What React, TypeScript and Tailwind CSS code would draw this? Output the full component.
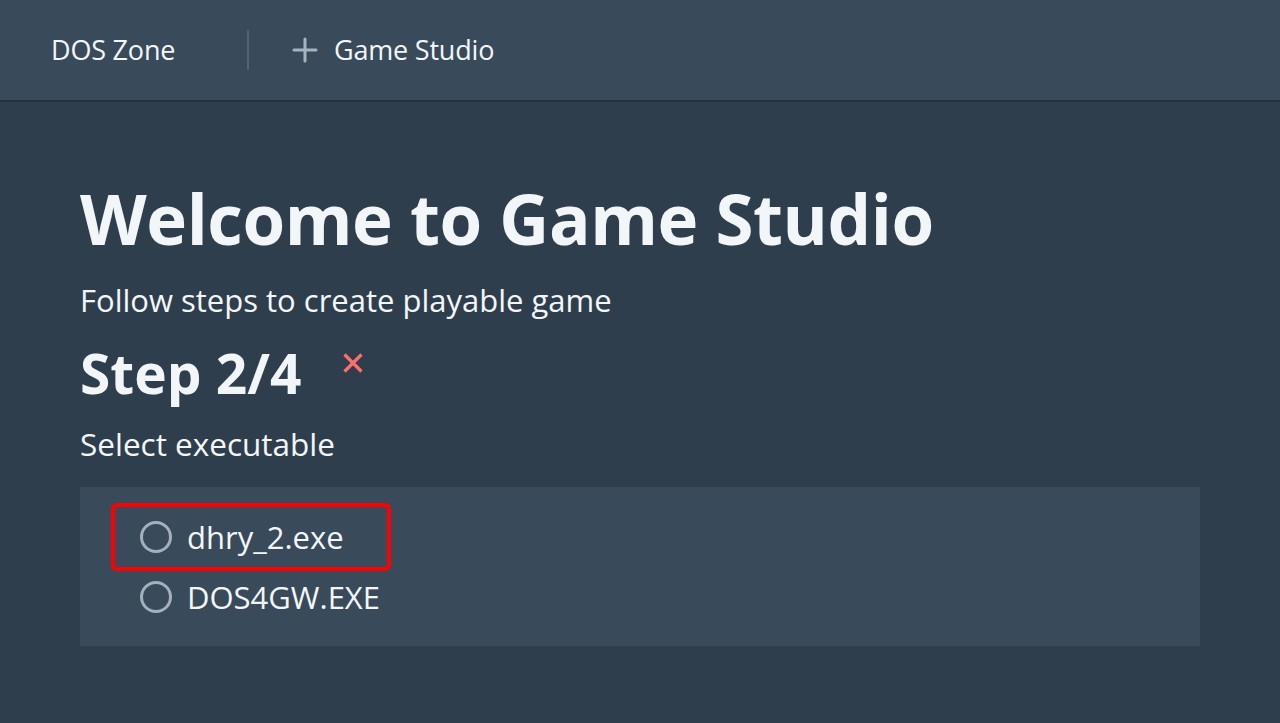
import React, { useState } from 'react';

const files = ['dhry_2.exe', 'DOS4GW.EXE'];

function App() {
    const [selected, setSelected] = useState<string | null>(null);

    return (
        <div className="min-h-[723px] bg-[#2f3e4c] text-[#f3f6f9]" style={{ fontFamily: '"Open Sans", "Noto Sans", sans-serif' }}>
            {/* top bar */}
            <div className="h-[102px] bg-[#394a5a] border-b-2 border-[#25313c] flex items-center">
                <div className="pl-[51px] w-[247px] text-[27px] tracking-[-0.2px]">DOS Zone</div>
                <div className="w-[2px] h-[40px] bg-[#536374] rounded"></div>
                <div className="flex items-center pl-[43px]">
                    <svg width="26" height="26" viewBox="0 0 26 26" className="mr-[16px]">
                        <path d="M13 2v22M2 13h22" stroke="#a6b4c2" strokeWidth="3" strokeLinecap="round" />
                    </svg>
                    <span className="text-[27px] tracking-[-0.2px]">Game Studio</span>
                </div>
            </div>

            <div className="pl-[80px] pr-[80px] pt-[75px]">
                <h1 className="text-[69px] font-bold leading-[83px] tracking-[-0.4px]">Welcome to Game Studio</h1>
                <p className="text-[31px] mt-[20px] leading-[40px]">Follow steps to create playable game</p>
                <div className="flex items-start mt-[20px]">
                    <h2 className="text-[55px] font-bold leading-[66px]">Step 2/4</h2>
                    <svg width="20" height="20" viewBox="0 0 20 20" className="ml-[42px] mt-[13px]">
                        <path d="M1.5 1.5l17 17M18.5 1.5l-17 17" stroke="#ff6e6e" strokeWidth="3.2" />
                    </svg>
                </div>
                <p className="text-[31.5px] mt-[18px] leading-[40px]">Select executable</p>

                <div className="mt-[23px] bg-[#394a5a] pt-[20px] pb-[19px] pl-[35px] flex flex-col">
                    {files.map((f, i) => (
                        <label
                            key={f}
                            className={
                                'flex items-center w-fit cursor-pointer h-[60px] pl-[25px] pr-[43px] ' +
                                (i === 0 ? 'outline-4 outline-solid outline-[#ff0000] outline-offset-0 rounded-[2px]' : '')
                            }
                            onClick={() => setSelected(f)}
                        >
                            <span className="w-[32px] h-[32px] rounded-full border-[3px] border-[#a3b1bf] flex items-center justify-center">
                                {selected === f && <span className="w-[16px] h-[16px] rounded-full bg-[#a3b1bf]"></span>}
                            </span>
                            <span className="ml-[15px] text-[31px] leading-[40px]">{f}</span>
                        </label>
                    ))}
                </div>
            </div>
        </div>
    );
}

export default App;
